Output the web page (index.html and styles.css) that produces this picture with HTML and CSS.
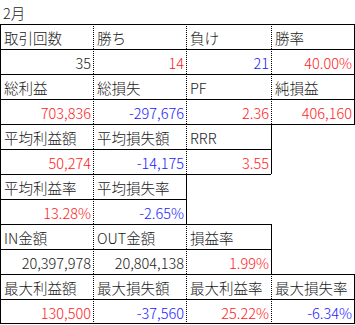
FILE: index.html
```html
<!DOCTYPE html>
<html lang="ja">
<head>
<meta charset="utf-8">
<title>2月</title>
<link rel="stylesheet" href="styles.css">
</head>
<body>
<div class="title">2月</div>
<div class="sheet">
  <div class="c lbl first">取引回数</div>
  <div class="c lbl">勝ち</div>
  <div class="c lbl">負け</div>
  <div class="c lbl last">勝率</div>

  <div class="c val first">35</div>
  <div class="c val red">14</div>
  <div class="c val blue">21</div>
  <div class="c val red last">40.00%</div>

  <div class="c lbl first">総利益</div>
  <div class="c lbl">総損失</div>
  <div class="c lbl">PF</div>
  <div class="c lbl last">純損益</div>

  <div class="c val red first">703,836</div>
  <div class="c val blue">-297,676</div>
  <div class="c val red">2.36</div>
  <div class="c val red last">406,160</div>

  <div class="c lbl first">平均利益額</div>
  <div class="c lbl">平均損失額</div>
  <div class="c lbl">RRR</div>
  <div class="blank edge top"></div>

  <div class="c val red first">50,274</div>
  <div class="c val blue">-14,175</div>
  <div class="c val red">3.55</div>
  <div class="blank edge"></div>

  <div class="c lbl first">平均利益率</div>
  <div class="c lbl">平均損失率</div>
  <div class="blank edge top"></div>
  <div class="blank"></div>

  <div class="c val red first">13.28%</div>
  <div class="c val blue">-2.65%</div>
  <div class="blank edge"></div>
  <div class="blank"></div>

  <div class="c lbl first">IN金額</div>
  <div class="c lbl">OUT金額</div>
  <div class="c lbl">損益率</div>
  <div class="blank edge"></div>

  <div class="c val first">20,397,978</div>
  <div class="c val">20,804,138</div>
  <div class="c val red">1.99%</div>
  <div class="blank edge"></div>

  <div class="c lbl first">最大利益額</div>
  <div class="c lbl">最大損失額</div>
  <div class="c lbl">最大利益率</div>
  <div class="c lbl last">最大損失率</div>

  <div class="c val red first bottom">130,500</div>
  <div class="c val blue bottom">-37,560</div>
  <div class="c val red bottom">25.22%</div>
  <div class="c val blue last bottom">-6.34%</div>
</div>
</body>
</html>
```

FILE: styles.css
```css
html, body {
  margin: 0;
  padding: 0;
  background: #fff;
}

body {
  font-family: "Noto Sans CJK JP", sans-serif;
  font-size: 14.5px;
  font-weight: 300;
  color: #1a1a1a;
  width: 355px;
}

.title {
  height: 24px;
  line-height: 25px;
  padding-left: 3px;
  box-sizing: border-box;
}

.sheet {
  display: grid;
  grid-template-columns: 93px 93px 85px 84px;
  grid-auto-rows: 25px;
}

.c {
  box-sizing: border-box;
  border-top: 1px solid #000;
  border-left: 1px dotted #000;
  line-height: 25px;
  white-space: nowrap;
  overflow: hidden;
}

.first {
  border-left: 1px solid #000;
}

.last {
  border-right: 1px solid #000;
}

.bottom {
  border-bottom: 1px solid #000;
  height: 25px;
}

.lbl {
  padding-left: 3px;
  text-align: left;
}

.val {
  padding-right: 2px;
  text-align: right;
}

.red {
  color: #ff1a1a;
}

.blue {
  color: #1a1aff;
}

.blank {
  box-sizing: border-box;
}

.blank.edge {
  border-left: 1px solid #000;
}

.blank.top {
  border-top: 1px solid #000;
}
```
